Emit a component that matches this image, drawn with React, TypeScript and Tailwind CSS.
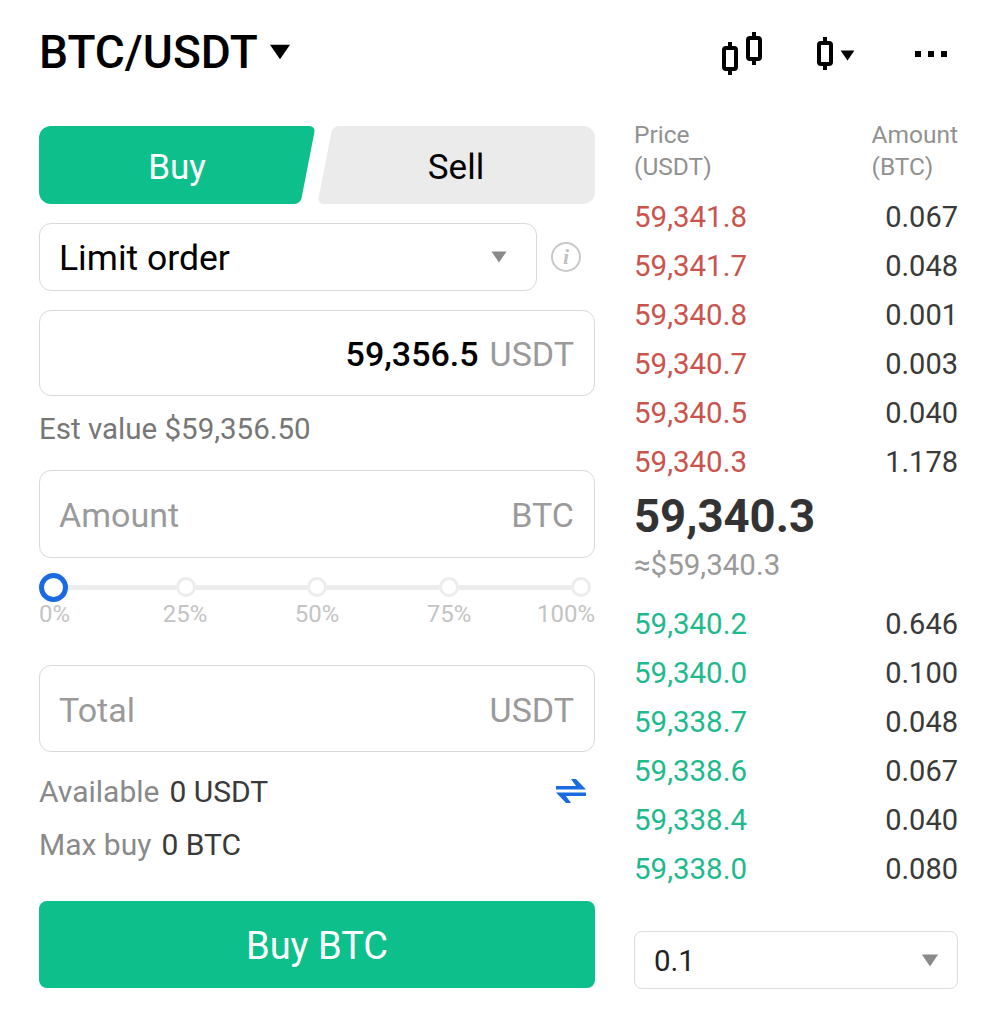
const asks = [
  ['59,341.8', '0.067'],
  ['59,341.7', '0.048'],
  ['59,340.8', '0.001'],
  ['59,340.7', '0.003'],
  ['59,340.5', '0.040'],
  ['59,340.3', '1.178'],
]

const bids = [
  ['59,340.2', '0.646'],
  ['59,340.0', '0.100'],
  ['59,338.7', '0.048'],
  ['59,338.6', '0.067'],
  ['59,338.4', '0.040'],
  ['59,338.0', '0.080'],
]

function Caret({ className }: { className: string }) {
  return (
    <svg viewBox="0 0 16 12" className={className} fill="currentColor">
      <path d="M0.5 0.5h15L8 11.5z" />
    </svg>
  )
}

function Candle({ x, y }: { x: number; y: number }) {
  return (
    <g fill="none" stroke="currentColor" strokeWidth="4">
      <rect x={x + 2} y={y + 6} width="12" height="21" rx="2" />
      <path d={`M${x + 8} ${y} v6 M${x + 8} ${y + 27} v6`} />
    </g>
  )
}

function Row({ price, amount, color }: { price: string; amount: string; color: string }) {
  return (
    <div className="flex h-[49px] items-center justify-between">
      <span className={`text-[29.5px] ${color}`}>{price}</span>
      <span className="text-[29px] text-[#3a3a3a]">{amount}</span>
    </div>
  )
}

function Field({ label, unit, className }: { label: string; unit: string; className: string }) {
  return (
    <div className={`flex items-center justify-between rounded-xl border border-[#d9d9d9] pl-[19px] pr-5 pt-[3px] text-[34px] text-[#9a9a9a] ${className}`}>
      <span>{label}</span>
      <span>{unit}</span>
    </div>
  )
}

export default function App() {
  return (
    <div className="h-[1024px] w-[996px] overflow-hidden bg-white pl-[39px] pr-[38px] font-['Roboto',sans-serif]">
      <header className="flex h-[104px] items-center justify-between">
        <div className="flex items-center gap-[10px]">
          <span className="text-[46px] font-medium leading-none text-black">BTC/USDT</span>
          <Caret className="h-[16px] w-[24px] text-black" />
        </div>
        <div className="flex items-center pr-[11px] pt-[4px] text-black">
          <svg viewBox="0 0 42 44" className="h-[44px] w-[42px]">
            <Candle x={1} y={10} />
            <Candle x={25} y={0} />
          </svg>
          <svg viewBox="0 0 16 34" className="ml-[54px] h-[34px] w-[16px]">
            <Candle x={0} y={0} />
          </svg>
          <Caret className="ml-[7px] mt-[3px] h-[11px] w-[15px]" />
          <div className="ml-[60px] flex gap-[7px]">
            <span className="h-[6px] w-[6px] bg-black" />
            <span className="h-[6px] w-[6px] bg-black" />
            <span className="h-[6px] w-[6px] bg-black" />
          </div>
        </div>
      </header>

      <div className="mt-[22px] flex gap-[39px]">
        <div className="w-[556px]">
          <div className="flex h-[78px] text-[35px]">
            <div className="relative flex w-[276px] items-center justify-center pt-[6px] text-white">
              <div className="absolute inset-y-0 left-0 right-[30px] rounded-l-xl bg-[#0dc08b]" />
              <div className="absolute inset-y-0 right-[7px] w-[60px] -skew-x-[11deg] rounded-md bg-[#0dc08b]" />
              <span className="relative">Buy</span>
            </div>
            <div className="relative ml-[2px] flex flex-1 items-center justify-center pt-[6px] text-black">
              <div className="absolute inset-y-0 right-0 left-[30px] rounded-r-xl bg-[#ebebeb]" />
              <div className="absolute inset-y-0 left-[8px] w-[60px] -skew-x-[11deg] rounded-md bg-[#ebebeb]" />
              <span className="relative">Sell</span>
            </div>
          </div>

          <div className="mt-[19px] flex items-center">
            <div className="flex h-[68px] w-[498px] items-center justify-between rounded-xl border border-[#d9d9d9] pl-[19px] pr-[29px]">
              <span className="pt-[3px] text-[35.5px] text-black">Limit order</span>
              <Caret className="h-[12px] w-[16px] text-[#8a8a8a]" />
            </div>
            <span className="ml-[14px] flex h-[30px] w-[30px] items-center justify-center rounded-full border-2 border-[#c8c8c8] font-['Liberation_Serif',serif] text-[22px] font-bold italic leading-none text-[#c0c0c0]">
              i
            </span>
          </div>

          <div className="mt-[19px] flex h-[86px] items-center justify-end gap-[11px] rounded-xl border border-[#d9d9d9] px-5 pt-[3px] text-[34px]">
            <span className="font-medium text-black">59,356.5</span>
            <span className="text-[#9a9a9a]">USDT</span>
          </div>

          <p className="mt-[16px] text-[29.5px] leading-[34px] text-[#777777]">Est value $59,356.50</p>

          <Field label="Amount" unit="BTC" className="mt-[24px] h-[88px]" />

          <div className="mt-[14px] flex h-[30px] items-center">
            <span className="h-[29px] w-[29px] rounded-full border-[5px] border-[#1a6be0] bg-white" />
            <span className="h-[5px] w-[108px] bg-[#ececec]" />
            <span className="h-[20px] w-[20px] rounded-full border-[3px] border-[#ececec] bg-white" />
            <span className="h-[5px] w-[111px] bg-[#ececec]" />
            <span className="h-[20px] w-[20px] rounded-full border-[3px] border-[#ececec] bg-white" />
            <span className="h-[5px] w-[112px] bg-[#ececec]" />
            <span className="h-[20px] w-[20px] rounded-full border-[3px] border-[#ececec] bg-white" />
            <span className="h-[5px] w-[112px] bg-[#ececec]" />
            <span className="h-[20px] w-[20px] rounded-full border-[3px] border-[#ececec] bg-white" />
          </div>
          <div className="-mt-[2px] grid grid-cols-[80px_132px_132px_132px_80px] text-[24px] leading-[28px] text-[#c4c4c4]">
            <span>0%</span>
            <span className="text-center">25%</span>
            <span className="text-center">50%</span>
            <span className="text-center">75%</span>
            <span className="text-right">100%</span>
          </div>

          <Field label="Total" unit="USDT" className="mt-[37px] h-[87px]" />

          <div className="mt-[21px] flex h-[36px] items-center justify-between text-[30px]">
            <p>
              <span className="text-[#8a8a8a]">Available</span>
              <span className="ml-[10px] text-[#3a3a3a]">0 USDT</span>
            </p>
            <svg viewBox="0 0 30 26" className="mr-[9px] h-[26px] w-[30px] text-[#1a6be0]" fill="currentColor">
              <path d="M0 8h20l-5-7h5L30 11.5H0zM0 14.5h30V18H10l5 7h-5z" />
            </svg>
          </div>
          <p className="mt-[18px] h-[36px] text-[30px] leading-[36px]">
            <span className="text-[#8a8a8a]">Max buy</span>
            <span className="ml-[10px] text-[#3a3a3a]">0 BTC</span>
          </p>

          <div className="mt-[38px] flex h-[87px] items-center justify-center rounded-lg bg-[#0dc08b] pt-[3px] text-[38px] text-white">
            Buy BTC
          </div>
        </div>

        <div className="w-[324px]">
          <div className="-mt-[7px] flex h-[74px] justify-between text-[24.5px] leading-[32px] text-[#919191]">
            <span>
              Price
              <br />
              (USDT)
            </span>
            <span>
              Amount
              <br />
              (BTC)
            </span>
          </div>
          <div>
            {asks.map(([price, amount]) => (
              <Row key={price} price={price} amount={amount} color="text-[#c9544e]" />
            ))}
          </div>
          <p className="mt-[4px] text-[45.5px] font-bold leading-[52px] text-[#333333]">59,340.3</p>
          <p className="mt-[3px] text-[29.5px] leading-[38px] text-[#9a9a9a]">≈$59,340.3</p>
          <div className="mt-[16px]">
            {bids.map(([price, amount]) => (
              <Row key={price} price={price} amount={amount} color="text-[#1fb98e]" />
            ))}
          </div>
          <div className="mt-[37px] flex h-[58px] items-center justify-between rounded-lg border border-[#dcdcdc] pl-[19px] pr-[18px]">
            <span className="pt-[3px] text-[29.5px] text-[#222222]">0.1</span>
            <Caret className="h-[13px] w-[18px] text-[#8a8a8a]" />
          </div>
        </div>
      </div>
    </div>
  )
}
